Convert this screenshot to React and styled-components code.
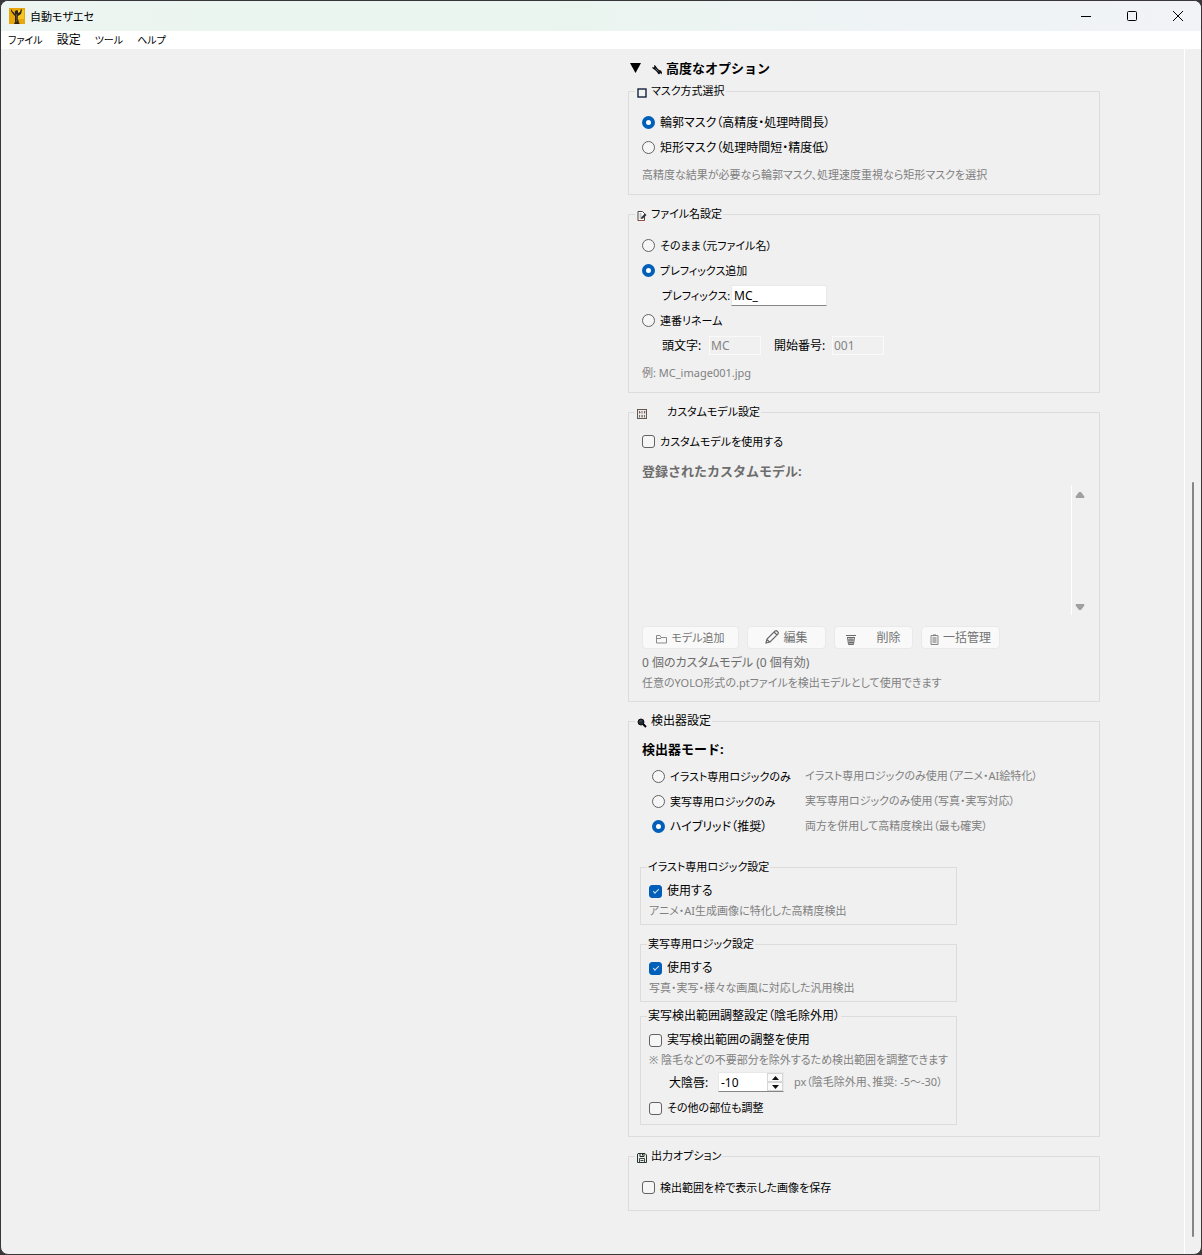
import React, { useState } from "react";
import styled, { createGlobalStyle } from "styled-components";

const GlobalStyle = createGlobalStyle`
  *, *::before, *::after { box-sizing: border-box; }
  html { background: #38363a; }
  body {
    margin: 0;
    font-family: "Noto Sans", "Noto Sans CJK JP", sans-serif;
    font-size: 12px;
    font-feature-settings: "palt";
    color: #000;
  }
  button, input { font: inherit; color: inherit; margin: 0; }
`;

const Window = styled.div`
  display: flex;
  flex-direction: column;
  min-height: 100vh;
  border: 1px solid #38363a;
  border-radius: 8px;
  overflow: hidden;
  background: #f0f0f0;
`;

const TitleBar = styled.header`
  display: flex;
  align-items: center;
  height: 30px;
  padding: 0 0 1px 8px;
  background: linear-gradient(90deg, #ecf5f1 0%, #eaf5ef 45%, #eff3f6 75%, #f1f3f6 100%);
`;

const Title = styled.h1`
  flex: 1;
  margin: 0 0 0 5px;
  font-size: 11px;
  font-weight: 400;
`;

const CaptionButton = styled.button`
  display: flex;
  align-items: center;
  justify-content: center;
  width: 46px;
  height: 29px;
  padding: 0;
  border: 0;
  background: transparent;
`;

const MenuBar = styled.nav`
  display: flex;
  align-items: center;
  gap: 14px;
  height: 18px;
  padding-left: 7px;
  background: #fff;
`;

const MenuLink = styled.a`
  color: #000;
  font-size: ${(p) => (p.$dense ? 10 : 12)}px;
  line-height: 18px;
  text-decoration: none;
  white-space: nowrap;
`;

const Body = styled.div`
  flex: 1;
  display: flex;
`;

const Content = styled.main`
  flex: 1;
  display: grid;
  grid-template-columns: minmax(0, 1fr) 472px;
  padding: 7px 84px 42px 0;
`;

const Options = styled.div`
  grid-column: 2;
  display: flex;
  flex-direction: column;
`;

const PageTrack = styled.div`
  display: grid;
  grid-template-rows: 433fr 755fr 17fr;
  justify-content: center;
  width: 17px;
  border-left: 1px solid #fff;
`;

const PageThumb = styled.div`
  grid-row: 2;
  width: 2px;
  border-radius: 1px;
  background: #858585;
`;

const SectionToggle = styled.button`
  display: flex;
  align-items: center;
  height: 26px;
  padding: 0 0 4px 2px;
  border: 0;
  background: transparent;
  font-size: 13px;
  font-weight: 700;
  font-feature-settings: normal;
`;

const ToggleArrow = styled.svg`
  margin: 1px 11px 0 0;
`;

const ToggleIcon = styled.svg`
  margin: 5px 4px 0 0;
`;

const Groups = styled.div`
  display: flex;
  flex-direction: column;
  gap: 10px;
`;

const Group = styled.fieldset`
  min-width: 0;
  margin: 0;
  padding: ${(p) => p.$top || 9}px 13px ${(p) => p.$bottom || 7}px;
  border: 1px solid #dcdcdc;
`;

const Legend = styled.legend`
  display: flex;
  align-items: center;
  gap: ${(p) => p.$gap || 4}px;
  height: 19px;
  margin-left: -7px;
  padding: 0 1px 2px 2px;
  font-size: ${(p) => (p.$dense ? 11 : 12)}px;
  line-height: 17px;
  white-space: nowrap;

  svg { margin-top: 4px; }
`;

const Choice = styled.label`
  display: flex;
  align-items: center;
  gap: 5px;
  height: ${(p) => (p.$compact ? 20 : 25)}px;
  font-size: ${(p) => (p.$dense ? 11 : 12)}px;
  line-height: ${(p) => (p.$compact ? 18 : 23)}px;
  white-space: nowrap;
`;

const Radio = styled.input.attrs({ type: "radio" })`
  appearance: none;
  flex: none;
  width: 13px;
  height: 13px;
  border: 1px solid #626262;
  border-radius: 50%;
  background: #f6f6f6;

  &:checked {
    border: 4px solid #005fb8;
    background: #fff;
  }
`;

const Check = styled.input.attrs({ type: "checkbox" })`
  appearance: none;
  flex: none;
  display: grid;
  place-items: center;
  width: 13px;
  height: 13px;
  border: 1px solid #626262;
  border-radius: 3px;
  background: #f6f6f6;

  &:checked {
    border-color: #005fb8;
    background: #005fb8;
  }

  &:checked::after {
    content: "";
    width: 6px;
    height: 3px;
    margin-bottom: 2px;
    border: solid #d5e5f4;
    border-width: 0 0 1px 1px;
    transform: rotate(-45deg);
  }
`;

const Hint = styled.p`
  margin: 2px 0 0;
  font-size: ${(p) => (p.$dense ? 11 : 12)}px;
  line-height: 25px;
  color: #808080;
  white-space: nowrap;
`;

const SmallHint = styled.p`
  margin: 0;
  font-size: 11px;
  line-height: 20px;
  color: #808080;
  white-space: nowrap;
`;

const FieldRow = styled.div`
  display: flex;
  align-items: center;
  height: 25px;
  padding-left: 20px;
`;

const FieldLabel = styled.label`
  flex: none;
  width: ${(p) => p.$width}px;
  font-size: ${(p) => (p.$dense ? 11 : 12)}px;
  line-height: 23px;
  white-space: nowrap;
`;

const TextField = styled.input`
  width: ${(p) => p.$width}px;
  height: 21px;
  padding: 0 2px;
  border: 1px solid #e8e8e8;
  border-bottom-color: #868686;
  background: #fff;
  outline: 0;

  &:disabled {
    height: 19px;
    margin-right: 13px;
    padding: 0 1px;
    border-color: #fafafa;
    background: #f0f0f0;
    color: #838383;
  }
`;

const Heading = styled.h2`
  margin: ${(p) => p.$top || 0}px 0 0;
  font-size: 13px;
  font-weight: 700;
  line-height: 25px;
  font-feature-settings: normal;
  color: ${(p) => (p.$muted ? "#6d6d6d" : "#000")};
`;

const ModelList = styled.div`
  display: flex;
  justify-content: flex-end;
  height: 130px;
  margin-top: 1px;
`;

const ListTrack = styled.div`
  display: flex;
  flex-direction: column;
  align-items: center;
  justify-content: space-between;
  width: 17px;
  margin-right: -2px;
  padding: 7px 0 5px;
  border-left: 1px solid #fff;
`;

const ArrowButton = styled.button`
  display: flex;
  padding: 0;
  border: 0;
  background: transparent;
`;

const ButtonRow = styled.div`
  display: flex;
  gap: 8px;
  margin-top: 11px;
`;

const ModelButton = styled.button`
  display: flex;
  align-items: center;
  justify-content: center;
  gap: ${(p) => p.$gap || 4}px;
  width: ${(p) => (p.$wide ? 97 : 79)}px;
  height: 23px;
  padding: 0 0 1px;
  border: 1px solid #e9e9e9;
  border-radius: 4px;
  background: #f9f9f9;
  color: #737373;
  font-size: ${(p) => (p.$wide ? 11 : 12)}px;
  white-space: nowrap;
`;

const Status = styled.p`
  margin: 4px 0 0;
  line-height: 20px;
  color: #6d6d6d;
`;

const ModeGrid = styled.div`
  display: grid;
  grid-template-columns: 153px 1fr;
  margin-top: 2px;
  padding-left: 10px;
`;

const ModeNote = styled.span`
  font-size: 11px;
  line-height: 23px;
  color: #808080;
  white-space: nowrap;
`;

const SubGroups = styled.div`
  display: flex;
  flex-direction: column;
  width: 317px;
  margin: 19px 0 0 -2px;
`;

const SubGroup = styled.fieldset`
  min-width: 0;
  margin: 0 0 ${(p) => p.$after || 0}px;
  padding: 4px 8px ${(p) => p.$bottom || 3}px;
  border: 1px solid #dcdcdc;
`;

const SubLegend = styled.legend`
  height: 19px;
  margin-left: -2px;
  padding: 0 1px;
  font-size: ${(p) => (p.$dense ? 11 : 12)}px;
  line-height: 18px;
`;

const SpinRow = styled.div`
  display: flex;
  align-items: center;
  height: 24px;
  margin-bottom: 4px;
  padding-left: 20px;
`;

const SpinBox = styled.div`
  display: flex;
  width: 66px;
  height: 20px;
  margin-right: 10px;
  border: 1px solid #e8e8e8;
  border-bottom-color: #868686;
  background: #fff;
`;

const SpinInput = styled.input.attrs({ type: "number" })`
  flex: 1;
  min-width: 0;
  padding: 0 2px;
  border: 0;
  outline: 0;
  background: transparent;
  appearance: textfield;

  &::-webkit-inner-spin-button { appearance: none; }
`;

const SpinButtons = styled.div`
  display: grid;
  grid-template-rows: 1fr 1fr;
  width: 16px;
  background: #f0f0f0;
`;

const SpinButton = styled.button`
  display: grid;
  place-items: center;
  padding: 0;
  border: 1px solid #d6d6d6;
  background: #fafafa;
`;

const AppLogo = () => (
  <svg width="16" height="16" viewBox="0 0 16 16" aria-hidden="true">
    <rect width="16" height="16" fill="#e8a80c" />
    <rect x="9" y="2" width="6" height="9" fill="#f6c522" />
    <path d="M2 1l2 3 2 1V3l2-1 1 1v2l2-1 1-3 1 1-1 4-3 2v3l1 4 1 1H5l1-2V8L4 6 2 3z" fill="#2c2414" />
    <path d="M7 6l1 2v4l-1 2M5 5l1 1" stroke="#77633a" fill="none" />
  </svg>
);

const WrenchIcon = () => (
  <ToggleIcon width="10" height="10" viewBox="0 0 10 10" aria-hidden="true">
    <path d="M3 3l4 4" stroke="#141414" strokeWidth="3" />
    <path d="M2 0l2 1 .5 2L3 4.500 1 4 0 2l1.500.5.8-.8z" fill="#111" />
    <path d="M6.500 5l2.500.5 1 2-.5 2-1-1.500L7 9.500 5.500 8z" fill="#111" />
    <path d="M3.500 3.500l3 3" stroke="#6d8ca3" strokeWidth=".8" />
  </ToggleIcon>
);

const SquareIcon = () => (
  <svg width="10" height="10" viewBox="0 0 10 10" aria-hidden="true">
    <rect x="1" y="1" width="8" height="8" fill="#f3f3f3" stroke="#13233c" strokeWidth="1.4" />
  </svg>
);

const MemoIcon = () => (
  <svg width="10" height="10" viewBox="0 0 10 10" aria-hidden="true">
    <path d="M1 .5h4.500l2 2V9.500H1z" fill="#fff" stroke="#4b4440" />
    <path d="M2.500 3h2M2.500 5h2M2.500 7h3" stroke="#888" />
    <path d="M4 8l.5-2L8 2.500 9.500 4 6 7.500z" fill="#32353a" />
    <path d="M2 9.500h5" stroke="#a34c3c" />
  </svg>
);

const KnobsIcon = () => (
  <svg width="10" height="10" viewBox="0 0 10 10" aria-hidden="true">
    <rect x=".5" y=".5" width="9" height="9" fill="#ece8e6" stroke="#625856" />
    <path d="M2.500 2v2.500M5 2v2.500M7.500 2v2.500M2.500 6v2.500M5 6v2.500M7.500 6v2.500" stroke="#726e70" />
    <path d="M2 3.500h1.500M4.500 7h1.500M7 3h1.500" stroke="#9b5042" />
  </svg>
);

const MagnifierIcon = () => (
  <svg width="10" height="10" viewBox="0 0 10 10" aria-hidden="true">
    <circle cx="4" cy="4" r="3" fill="#1d2c36" stroke="#111" />
    <path d="M3 3.500l1-1" stroke="#a98" />
    <path d="M6 6l3 3" stroke="#000" strokeWidth="2" />
  </svg>
);

const DiskIcon = () => (
  <svg width="10" height="10" viewBox="0 0 10 10" aria-hidden="true">
    <path d="M1 .5h7l1.500 1.500v7.500H.5V1z" fill="#e6ece8" stroke="#24372f" />
    <path d="M3 .5v3h4v-3M5.500 1v1.500" stroke="#222" fill="none" />
    <path d="M2.500 9.500v-4h5v4M3.500 7.500h3" stroke="#444" fill="none" />
  </svg>
);

const FolderIcon = () => (
  <svg width="11" height="10" viewBox="0 0 11 10" aria-hidden="true">
    <path d="M.5 9V1.500h3.500l1 2h5.500V9z M.5 4.500h4.500" fill="none" stroke="#8a8a8a" />
  </svg>
);

const PencilIcon = () => (
  <svg width="14" height="14" viewBox="0 0 14 14" aria-hidden="true">
    <path d="M1 13l1-4L10 1l1.500-.3L13.300 2.500 13 4 5 12z M9 2l3 3M2 9.500L4.500 12" fill="none" stroke="#686868" strokeWidth="1.200" />
  </svg>
);

const TrashIcon = () => (
  <svg width="10" height="11" viewBox="0 0 10 11" aria-hidden="true">
    <path d="M0 1.500h10M1 3.500h8M1.500 3l1 7.500h5l1-7.500M4 3v7M6 3v7M2 6h6M2.500 8.500h5" fill="none" stroke="#686868" />
  </svg>
);

const ClipboardIcon = () => (
  <svg width="9" height="11" viewBox="0 0 9 11" aria-hidden="true">
    <path d="M1 1.500h7v9H1z" fill="#eee" stroke="#8a8a8a" />
    <path d="M3 1h3M2.500 4h4M2.500 6h4M2.500 8h4" stroke="#777" />
  </svg>
);

const Lowered = styled.span`
  display: flex;
  padding-top: 4px;
`;

function SpinArrow({ down }) {
  return (
    <svg width="7" height="4" viewBox="0 0 7 4" aria-hidden="true">
      <path d={down ? "M0 0h7L3.500 4z" : "M0 4h7L3.500 0z"} fill="#111" />
    </svg>
  );
}

function ListArrow({ down, label }) {
  return (
    <ArrowButton type="button" disabled aria-label={label}>
      <svg width="10" height="6" viewBox="0 0 10 6" aria-hidden="true">
        <path d={down ? "M1 0h8q1 1 0 2L6 6H4L1 2Q0 1 1 0z" : "M1 6h8q1-1 0-2L6 0H4L1 4Q0 5 1 6z"} fill="#a0a0a0" />
      </svg>
    </ArrowButton>
  );
}

const detectorModes = [
  { id: "illust", dense: true, label: "イラスト専用ロジックのみ", note: "イラスト専用ロジックのみ使用（アニメ・AI絵特化）" },
  { id: "photo", dense: true, label: "実写専用ロジックのみ", note: "実写専用ロジックのみ使用（写真・実写対応）" },
  { id: "hybrid", dense: false, label: "ハイブリッド（推奨）", note: "両方を併用して高精度検出（最も確実）" },
];

export default function App() {
  const [margin, setMargin] = useState(-10);

  return (
    <>
      <GlobalStyle />
      <Window>
        <TitleBar>
          <AppLogo />
          <Title>自動モザエセ</Title>
          <CaptionButton type="button" aria-label="最小化">
            <svg width="10" height="10" aria-hidden="true"><path d="M0 5.500h10" stroke="#000" /></svg>
          </CaptionButton>
          <CaptionButton type="button" aria-label="最大化">
            <svg width="10" height="10" aria-hidden="true"><rect x=".5" y=".5" width="9" height="9" rx="1" fill="none" stroke="#000" /></svg>
          </CaptionButton>
          <CaptionButton type="button" aria-label="閉じる">
            <svg width="10" height="10" aria-hidden="true"><path d="M0 0l10 10M10 0L0 10" stroke="#000" /></svg>
          </CaptionButton>
        </TitleBar>
        <MenuBar>
          <MenuLink $dense href="#file">ファイル</MenuLink>
          <MenuLink href="#settings">設定</MenuLink>
          <MenuLink $dense href="#tools">ツール</MenuLink>
          <MenuLink $dense href="#help">ヘルプ</MenuLink>
        </MenuBar>
        <Body>
          <Content>
            <Options>
              <SectionToggle type="button" aria-expanded="true">
                <ToggleArrow width="11" height="10" aria-hidden="true"><path d="M0 0h11L5.500 10z" /></ToggleArrow>
                <WrenchIcon />
                高度なオプション
              </SectionToggle>
              <Groups>
                <Group>
                  <Legend $dense><SquareIcon />マスク方式選択</Legend>
                  <Choice><Radio name="mask" defaultChecked />輪郭マスク（高精度・処理時間長）</Choice>
                  <Choice><Radio name="mask" />矩形マスク（処理時間短・精度低）</Choice>
                  <Hint $dense>高精度な結果が必要なら輪郭マスク、処理速度重視なら矩形マスクを選択</Hint>
                </Group>

                <Group>
                  <Legend $dense><MemoIcon />ファイル名設定</Legend>
                  <Choice $dense><Radio name="filename" />そのまま（元ファイル名）</Choice>
                  <Choice $dense><Radio name="filename" defaultChecked />プレフィックス追加</Choice>
                  <FieldRow>
                    <FieldLabel $dense htmlFor="prefix" $width={69}>プレフィックス:</FieldLabel>
                    <TextField id="prefix" type="text" defaultValue="MC_" $width={96} />
                  </FieldRow>
                  <Choice $dense><Radio name="filename" />連番リネーム</Choice>
                  <FieldRow>
                    <FieldLabel htmlFor="head" $width={47}>頭文字:</FieldLabel>
                    <TextField id="head" type="text" defaultValue="MC" disabled $width={52} />
                    <FieldLabel htmlFor="start" $width={58}>開始番号:</FieldLabel>
                    <TextField id="start" type="text" defaultValue="001" disabled $width={52} />
                  </FieldRow>
                  <Hint $dense>例: MC_image001.jpg</Hint>
                </Group>

                <Group $top={7} $bottom={8}>
                  <Legend $dense $gap={20}><KnobsIcon />カスタムモデル設定</Legend>
                  <Choice $dense><Check />カスタムモデルを使用する</Choice>
                  <Heading $muted $top={5}>登録されたカスタムモデル:</Heading>
                  <ModelList>
                    <ListTrack>
                      <ListArrow label="上へ" />
                      <ListArrow down label="下へ" />
                    </ListTrack>
                  </ModelList>
                  <ButtonRow>
                    <ModelButton type="button" disabled $wide><Lowered><FolderIcon /></Lowered>モデル追加</ModelButton>
                    <ModelButton type="button" disabled><PencilIcon />編集</ModelButton>
                    <ModelButton type="button" disabled $gap={20}><Lowered><TrashIcon /></Lowered>削除</ModelButton>
                    <ModelButton type="button" disabled><Lowered><ClipboardIcon /></Lowered>一括管理</ModelButton>
                  </ButtonRow>
                  <Status>0 個のカスタムモデル (0 個有効)</Status>
                  <SmallHint>任意のYOLO形式の.ptファイルを検出モデルとして使用できます</SmallHint>
                </Group>

                <Group $top={6} $bottom={11}>
                  <Legend><MagnifierIcon />検出器設定</Legend>
                  <Heading>検出器モード:</Heading>
                  <ModeGrid>
                    {detectorModes.map(({ id, dense, label, note }) => (
                      <React.Fragment key={id}>
                        <Choice $dense={dense}>
                          <Radio name="mode" defaultChecked={id === "hybrid"} />
                          {label}
                        </Choice>
                        <ModeNote>{note}</ModeNote>
                      </React.Fragment>
                    ))}
                  </ModeGrid>
                  <SubGroups>
                    <SubGroup $after={10}>
                      <SubLegend $dense>イラスト専用ロジック設定</SubLegend>
                      <Choice $compact><Check defaultChecked />使用する</Choice>
                      <SmallHint>アニメ・AI生成画像に特化した高精度検出</SmallHint>
                    </SubGroup>
                    <SubGroup $after={5}>
                      <SubLegend $dense>実写専用ロジック設定</SubLegend>
                      <Choice $compact><Check defaultChecked />使用する</Choice>
                      <SmallHint>写真・実写・様々な画風に対応した汎用検出</SmallHint>
                    </SubGroup>
                    <SubGroup $bottom={6}>
                      <SubLegend>実写検出範囲調整設定（陰毛除外用）</SubLegend>
                      <Choice $compact><Check />実写検出範囲の調整を使用</Choice>
                      <SmallHint>※ 陰毛などの不要部分を除外するため検出範囲を調整できます</SmallHint>
                      <SpinRow>
                        <FieldLabel htmlFor="margin" $width={49}>大陰唇:</FieldLabel>
                        <SpinBox>
                          <SpinInput id="margin" value={margin} onChange={(e) => setMargin(Number(e.target.value))} />
                          <SpinButtons>
                            <SpinButton type="button" aria-label="増やす" onClick={() => setMargin(margin + 1)}><SpinArrow /></SpinButton>
                            <SpinButton type="button" aria-label="減らす" onClick={() => setMargin(margin - 1)}><SpinArrow down /></SpinButton>
                          </SpinButtons>
                        </SpinBox>
                        <SmallHint>px（陰毛除外用、推奨: -5～-30）</SmallHint>
                      </SpinRow>
                      <Choice $compact $dense><Check />その他の部位も調整</Choice>
                    </SubGroup>
                  </SubGroups>
                </Group>

                <Group $bottom={10}>
                  <Legend $dense><DiskIcon />出力オプション</Legend>
                  <Choice $dense><Check />検出範囲を枠で表示した画像を保存</Choice>
                </Group>
              </Groups>
            </Options>
          </Content>
          <PageTrack><PageThumb /></PageTrack>
        </Body>
      </Window>
    </>
  );
}
